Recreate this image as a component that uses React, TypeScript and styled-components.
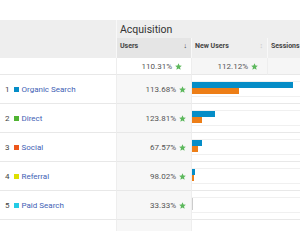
import { Fragment } from "react";
import styled, { createGlobalStyle } from "styled-components";

const Global = createGlobalStyle`
  body {
    margin: 0;
    background: #ffffff;
    font-family: Roboto, "Liberation Sans", sans-serif;
  }
`;

const Page = styled.div`
  width: 300px;
  height: 250px;
  padding-top: 20px;
  box-sizing: border-box;
  overflow: hidden;
`;

const Table = styled.div`
  display: grid;
  grid-template-columns: 117px 75px 76px 120px;
  width: 388px;
`;

const HeadBlank = styled.div`
  grid-row: span 2;
  background: #eeeeee;
  border-right: 1px solid #f8f8f8;
  box-sizing: border-box;
`;

const GroupHead = styled.div`
  grid-column: 2 / 5;
  height: 18px;
  background: #eeeeee;
  padding: 3px 0 0 3px;
  box-sizing: border-box;
  font-size: 10.5px;
  color: #333333;
`;

const SubHead = styled.div<{ $sorted?: boolean }>`
  height: 20px;
  display: flex;
  justify-content: space-between;
  padding: 4px 4px 0 3px;
  box-sizing: border-box;
  background: ${(p) => (p.$sorted ? "#e5e5e5" : "#eeeeee")};
  border-right: 1px solid #f8f8f8;
  font-size: 7px;
  font-weight: 700;
  color: #444444;
`;

const SortMark = styled.span<{ $active?: boolean }>`
  font-size: 7px;
  font-weight: 400;
  color: ${(p) => (p.$active ? "#333333" : "#c8c8c8")};
`;

const Cell = styled.div<{ $bg?: string; $span?: number }>`
  grid-column: span ${(p) => p.$span || 1};
  height: 29px;
  box-sizing: border-box;
  border-bottom: 1px solid #e8e8e8;
  border-right: 1px solid #eeeeee;
  background: ${(p) => p.$bg || "#ffffff"};
  display: flex;
  align-items: center;
`;

const TotalCell = styled(Cell)`
  height: 17px;
  justify-content: flex-end;
  padding-right: 4px;
`;

const Filler = styled(Cell)`
  height: 11px;
  border-bottom: none;
`;

const Label = styled.div`
  display: flex;
  align-items: center;
  padding-left: 5px;
  font-size: 8px;
  color: #444444;
`;

const Swatch = styled.span<{ $color: string }>`
  width: 5px;
  height: 5px;
  margin: 0 3px 0 4px;
  background: ${(p) => p.$color};
`;

const Link = styled.span`
  color: #3f5fb5;
`;

const Value = styled.div`
  flex: 1;
  display: flex;
  justify-content: flex-end;
  align-items: center;
  gap: 3px;
  padding-right: 5px;
  font-size: 8px;
  color: #555555;
`;

const BarBox = styled.div`
  align-self: flex-start;
  margin-top: 6px;
  width: 100%;
  height: 14px;
  border-top: 1px solid #f0f0f0;
  border-bottom: 1px solid #f0f0f0;
  display: flex;
  flex-direction: column;
`;

const Bar = styled.div<{ $color: string }>`
  height: 6px;
  background: ${(p) => p.$color};
`;

const Star = () => (
  <svg width="7" height="7" viewBox="0 0 10 10">
    <path d="M5 0.3 L6.4 3.5 L9.8 3.8 L7.2 6.1 L8 9.6 L5 7.8 L2 9.6 L2.8 6.1 L0.2 3.8 L3.6 3.5 Z" fill="#5cb85c" />
  </svg>
);

const rows = [
  { n: 1, name: "Organic Search", color: "#058dc7", value: "113.68%", a: 101, b: 47 },
  { n: 2, name: "Direct", color: "#50b432", value: "123.81%", a: 23, b: 10 },
  { n: 3, name: "Social", color: "#ed561b", value: "67.57%", a: 10, b: 6 },
  { n: 4, name: "Referral", color: "#dddf00", value: "98.02%", a: 2.5, b: 1.5 },
  { n: 5, name: "Paid Search", color: "#24cbe5", value: "33.33%", a: 0, b: 0 },
];

export default function App() {
  return (
    <Page>
      <Global />
      <Table>
        <HeadBlank />
        <GroupHead>Acquisition</GroupHead>
        <SubHead $sorted>
          Users <SortMark $active>↓</SortMark>
        </SubHead>
        <SubHead>
          New Users <SortMark>↕</SortMark>
        </SubHead>
        <SubHead>Sessions</SubHead>

        <TotalCell />
        <TotalCell>
          <Value>
            110.31% <Star />
          </Value>
        </TotalCell>
        <TotalCell $bg="#f6f6f6">
          <Value>
            112.12% <Star />
          </Value>
        </TotalCell>
        <TotalCell $bg="#f6f6f6" />

        {rows.map((r) => (
          <Fragment key={r.n}>
            <Cell>
              <Label>
                {r.n}
                <Swatch $color={r.color} />
                <Link>{r.name}</Link>
              </Label>
            </Cell>
            <Cell $bg="#f7f7f7">
              <Value>
                {r.value} <Star />
              </Value>
            </Cell>
            <Cell $span={2}>
              <BarBox>
                <Bar $color={r.a ? "#058dc7" : "#cccccc"} style={{ width: r.a || 1 }} />
                <Bar $color={r.b ? "#ed7e17" : "#cccccc"} style={{ width: r.b || 1 }} />
              </BarBox>
            </Cell>
          </Fragment>
        ))}

        <Filler />
        <Filler $bg="#f7f7f7" />
        <Filler $span={2} />
      </Table>
    </Page>
  );
}
